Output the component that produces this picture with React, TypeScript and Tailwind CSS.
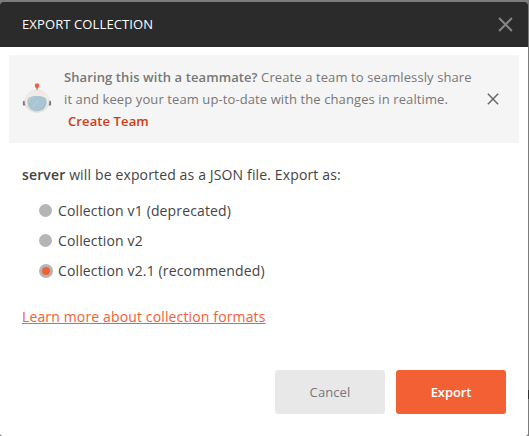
const formats = [
  { label: 'Collection v1 (deprecated)', selected: false },
  { label: 'Collection v2', selected: false },
  { label: 'Collection v2.1 (recommended)', selected: true },
];

function Robot() {
  return (
    <svg className="block h-[32px] w-[30px] shrink-0" viewBox="0 0 30 32" fill="none">
      <path d="M15 4v4" stroke="#85797a" strokeWidth="1.2" />
      <rect x="13" y="0.4" width="4" height="4.4" rx="1" fill="#f0603f" />
      <rect x="0.9" y="17.8" width="3.2" height="4.8" rx="1.2" fill="#7d7878" />
      <rect x="25.9" y="17.8" width="3.2" height="4.8" rx="1.2" fill="#7d7878" />
      <ellipse cx="15" cy="18.4" rx="12.4" ry="11.6" fill="#e9e2db" />
      <ellipse cx="15" cy="17.4" rx="11.4" ry="10" fill="#f0ebe6" />
      <path d="M5.4 18.4c0-4 3.4-5.4 9.6-5.4s9.6 1.4 9.6 5.4c0 6-4.4 9.8-9.6 9.8s-9.6-3.8-9.6-9.8z" fill="#a9c4d3" />
      <path d="M6.8 19c0-2.8 1.5-4.2 5-4.6M10 24.5l7-8" stroke="#bdd2dd" strokeWidth="1" />
      <path d="M18.8 26.8c3-1.7 4.7-4.3 4.9-7.6" stroke="#95b5c7" strokeWidth="0.8" />
    </svg>
  );
}

function Close({ className }: { className: string }) {
  return (
    <svg className={className} viewBox="0 0 14 14" fill="none" stroke="currentColor">
      <path d="M1 1l12 12M13 1L1 13" />
    </svg>
  );
}

export default function App() {
  return (
    <div className="relative h-[436px] w-[529px] overflow-hidden bg-[#7c7c7c] pt-[2px] pr-px font-['Open_Sans',sans-serif] text-[14px] text-[#444]">
      <span className="absolute top-[390px] right-0 h-[9px] w-px bg-[#333]" />
      <div className="flex h-[434px] flex-col overflow-hidden rounded-[3px] bg-white">
        <header className="flex h-[45px] shrink-0 items-center justify-between bg-[#2b2b2b] pr-[15px] pl-[22px] text-white">
          <h1 className="pb-[2px] text-[13px] leading-[20px] tracking-[0.12px]">EXPORT COLLECTION</h1>
          <Close className="size-[15px] stroke-[1.9] text-[#858585]" />
        </header>

        <section className="mx-[9px] mt-[8px] flex h-[88px] shrink-0 items-center bg-[#f5f5f5] pr-[20px] pl-[13px]">
          <Robot />
          <p className="ml-[12px] text-[13px] leading-[22px] tracking-[0.1px] whitespace-nowrap text-[#777]">
            <strong className="font-semibold">Sharing this with a teammate?</strong> Create a team to seamlessly share
            <br />
            it and keep your team up-to-date with the changes in realtime.
            <br />
            <a className="ml-[4px] font-semibold text-[#d13a12]">Create Team</a>
          </p>
          <Close className="ml-auto size-[12px] shrink-0 stroke-[1.7] text-[#666]" />
        </section>

        <main className="px-[22px] pt-[22px] tracking-[0.14px]">
          <p className="leading-[20px]">
            <strong className="font-semibold">server</strong> will be exported as a JSON file. Export as:
          </p>
          <div className="mt-[10px] pl-[17px]">
            {formats.map((format) => (
              <label key={format.label} className="flex h-[30px] items-center">
                <span className="flex w-[19px] shrink-0">
                  {format.selected ? (
                    <span className="mt-px flex size-[14px] items-center justify-center rounded-full bg-[#b5b5b5]">
                      <span className="size-[8px] rounded-full bg-[#f26033]" />
                    </span>
                  ) : (
                    <span className="size-[13px] rounded-full bg-[#b5b5b5]" />
                  )}
                </span>
                <span>{format.label}</span>
              </label>
            ))}
          </div>
          <a className="mt-[22px] block w-fit leading-[20px] text-[#f26033] underline">
            Learn more about collection formats
          </a>
        </main>

        <footer className="mt-auto mb-[22px] flex justify-end gap-[11px] pr-[22px] text-[13px]">
          <button className="h-[44px] w-[110px] rounded-[3px] bg-[#e8e8e8] pt-[2px] tracking-[0.1px] text-[#777]">Cancel</button>
          <button className="h-[44px] w-[110px] rounded-[3px] bg-[#f26033] pt-[2px] font-semibold tracking-[-0.1px] text-white">Export</button>
        </footer>
      </div>
    </div>
  );
}
